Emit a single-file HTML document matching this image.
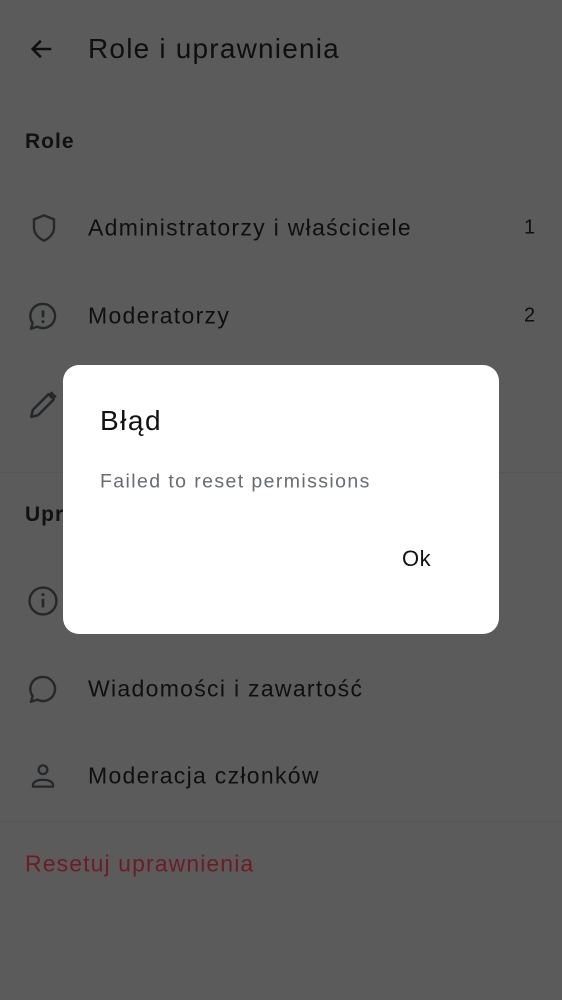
<!DOCTYPE html>
<html><head><meta charset="utf-8"><style>
body{margin:0;width:562px;height:1000px;background:#5b5b5b;font-family:"Liberation Sans",sans-serif;position:relative;overflow:hidden;color:#0f0f0f}
.a{position:absolute;white-space:nowrap}
.t{font-size:23px;letter-spacing:1.3px;transform:translateY(-50%)}
svg{position:absolute}
.hr{position:absolute;left:0;width:562px;height:1px;background:#555}
</style></head><body>
<svg style="left:28px;top:35px" width="28" height="28" viewBox="0 0 24 24"><path d="M20 12H5M11 5l-7 7 7 7" fill="none" stroke="#0f0f0f" stroke-width="2.2"/></svg>
<div class="a t" style="left:88px;top:49px;font-size:28px;letter-spacing:1.2px">Role i uprawnienia</div>
<div class="a t" style="left:25px;top:142px;font-size:21px;font-weight:bold;color:#111;letter-spacing:1px">Role</div>

<svg style="left:28px;top:212px" width="32" height="32" viewBox="0 0 24 24"><path d="M12 2.5l7.5 3v6c0 4.5-3.2 8-7.5 10-4.3-2-7.5-5.5-7.5-10v-6z" fill="none" stroke="#25282b" stroke-width="1.8" stroke-linejoin="round"/></svg>
<div class="a t" style="left:88px;top:228px">Administratorzy i właściciele</div>
<div class="a t" style="left:524px;top:228px;font-size:20px">1</div>

<svg style="left:26px;top:299px" width="34" height="34" viewBox="0 0 24 24"><path d="M12 3.5a8.5 8.5 0 1 1-4 16L3.5 21l1.2-4A8.5 8.5 0 0 1 12 3.5z" fill="none" stroke="#25282b" stroke-width="1.7" stroke-linejoin="round"/><path d="M12 8v5" stroke="#25282b" stroke-width="1.9"/><circle cx="12" cy="16" r="1.1" fill="#25282b"/></svg>
<div class="a t" style="left:88px;top:316px">Moderatorzy</div>
<div class="a t" style="left:524px;top:316px;font-size:20px">2</div>

<svg style="left:26px;top:386px" width="36" height="36" viewBox="0 0 24 24"><path d="M3.5 20.5l1-4.5L15 5.5l3.5 3.5L8 19.5z" fill="none" stroke="#25282b" stroke-width="1.7" stroke-linejoin="round"/><path d="M15 5.5l2-2 3.5 3.5-2 2z" fill="#25282b"/></svg>
<div class="hr" style="top:472px"></div>
<div class="a t" style="left:25px;top:515px;font-size:21px;font-weight:bold;color:#111;letter-spacing:1px">Uprawnienia</div>

<svg style="left:26px;top:584px" width="34" height="34" viewBox="0 0 24 24"><circle cx="12" cy="12" r="9.5" fill="none" stroke="#25282b" stroke-width="1.7"/><path d="M12 10.5v6" stroke="#25282b" stroke-width="1.9"/><circle cx="12" cy="7.5" r="1.1" fill="#25282b"/></svg>

<svg style="left:26px;top:672px" width="34" height="34" viewBox="0 0 24 24"><path d="M12 3.5a8.5 8.5 0 1 1-4 16L3.5 21l1.2-4A8.5 8.5 0 0 1 12 3.5z" fill="none" stroke="#25282b" stroke-width="1.7" stroke-linejoin="round"/></svg>
<div class="a t" style="left:88px;top:689px">Wiadomości i zawartość</div>

<svg style="left:28px;top:760px" width="30" height="32" viewBox="0 0 24 24"><circle cx="12" cy="7" r="3.5" fill="none" stroke="#25282b" stroke-width="1.8"/><path d="M4 20.5v-1.5c0-2.5 4-4 8-4s8 1.5 8 4v1.5z" fill="none" stroke="#25282b" stroke-width="1.8" stroke-linejoin="round"/></svg>
<div class="a t" style="left:88px;top:776px">Moderacja członków</div>
<div class="hr" style="top:821px"></div>
<div class="a t" style="left:25px;top:864px;color:#6e1c24;letter-spacing:1.1px">Resetuj uprawnienia</div>

<div class="a" style="left:63px;top:365px;width:436px;height:269px;background:#fff;border-radius:16px">
<div class="a t" style="left:37px;top:56px;font-size:28px;color:#111;letter-spacing:1.5px">Błąd</div>
<div class="a t" style="left:37px;top:117px;font-size:19.5px;color:#676c71;letter-spacing:1.4px">Failed to reset permissions</div>
<div class="a t" style="left:339px;top:194px;font-size:22px;color:#111;letter-spacing:0.5px">Ok</div>
</div>
</body></html>
